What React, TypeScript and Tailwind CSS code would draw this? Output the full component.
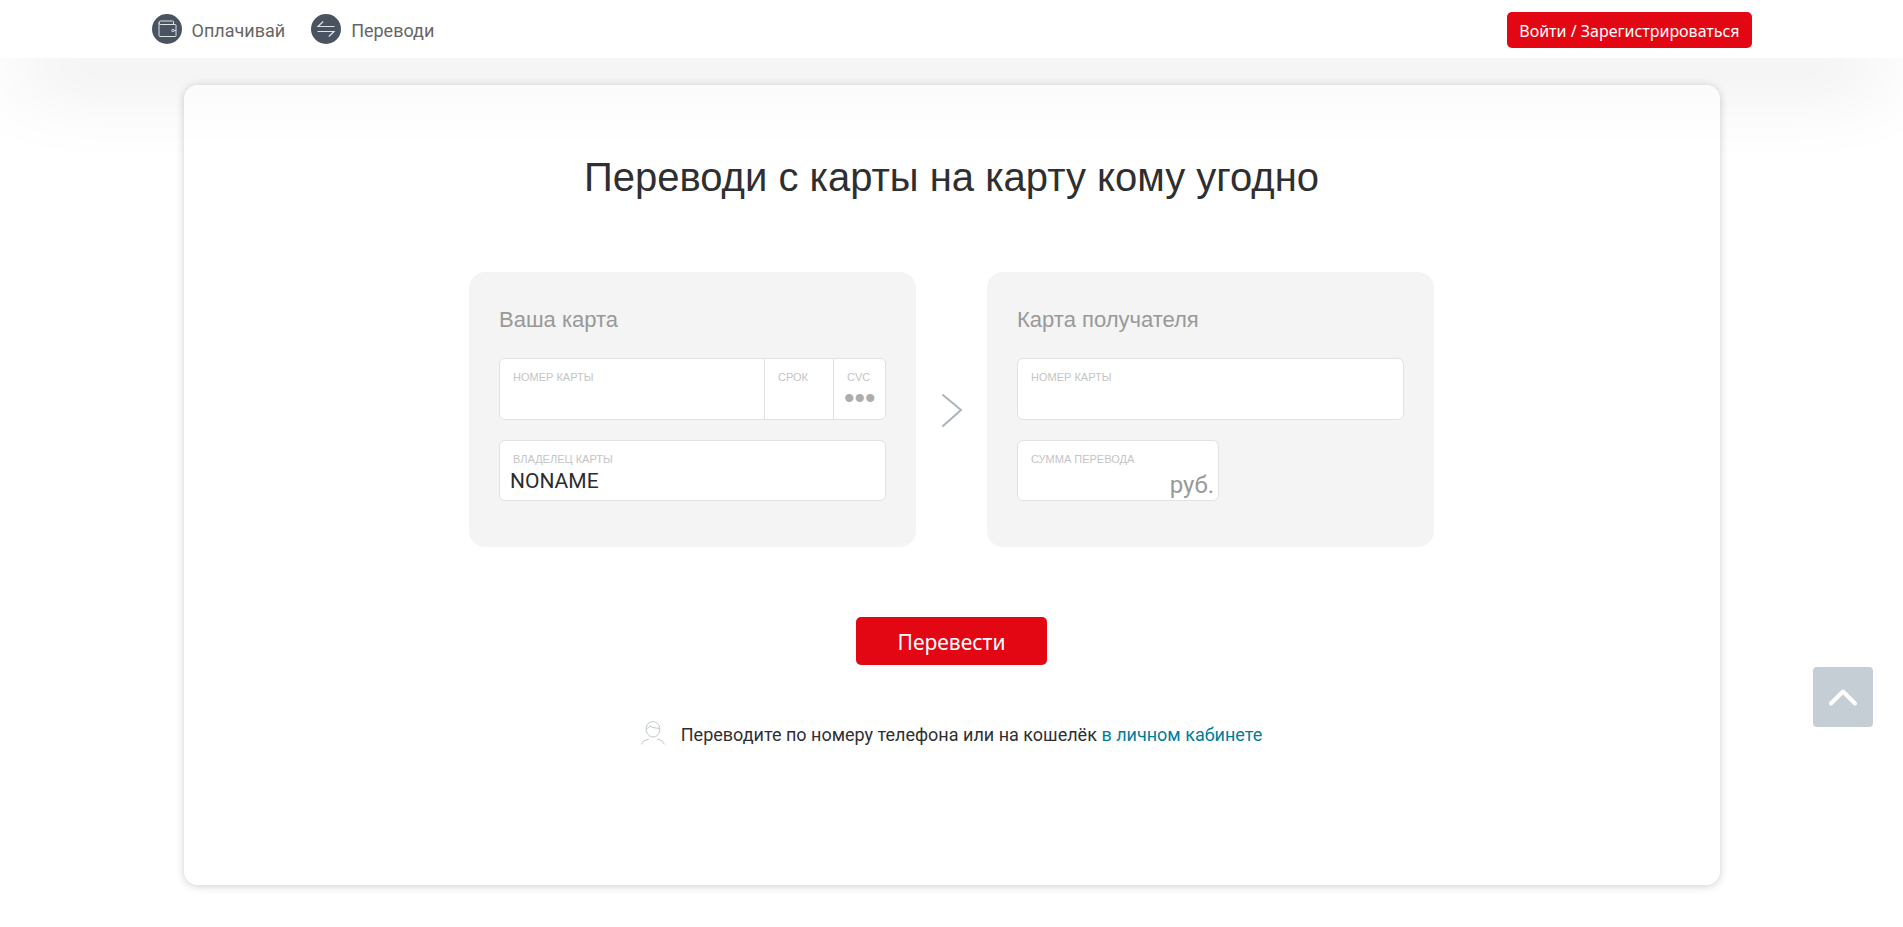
import React, { useId } from "react";

function WalletIcon() {
  return (
    <svg viewBox="0 0 30 30" className="size-[30px]" fill="none" stroke="#dfe3e8" aria-hidden="true">
      <circle cx="15" cy="15" r="15" fill="#4a5461" stroke="none" />
      <path d="M7 8.500v13.100q0 .9.9.9h15.200q.9 0 .9-.9V11.400q0-.9-.9-.9H8.200Q7 10.500 7 9q0-2 1.500-2h12.300q.7 0 .7.700V10.500" strokeWidth="1" />
      <circle cx="20.900" cy="16.500" r="1.200" strokeWidth="1" />
      <path d="M22.100 16.500H24" strokeWidth="1" />
    </svg>
  );
}

function TransferIcon() {
  return (
    <svg viewBox="0 0 30 30" className="size-[30px]" fill="none" stroke="#dfe3e8" strokeWidth="1.200" aria-hidden="true">
      <circle cx="15" cy="15" r="15" fill="#4a5461" stroke="none" />
      <path d="M12.200 7.500 7 12.500h16.500M6.500 17.500H23l-5.200 5" />
    </svg>
  );
}

function PersonIcon() {
  return (
    <svg viewBox="0 0 24 24" className="size-6 shrink-0" fill="none" stroke="#bcc5ca" aria-hidden="true">
      <path d="M12 .7c3.900 0 6.800 2.900 6.800 7.300 0 4.700-3 8-6.800 8s-6.800-3.300-6.800-8C5.200 3.600 8.100.7 12 .7Z" />
      <path d="M5.400 7.500c1.700-.3 2.900-1.400 3.500-3 1.700 2.200 5.200 2.600 9.700 2.800M.8 23.500c.4-2.800 3-4.700 7-5.300M23.200 23.500c-.4-2.800-3-4.700-7-5.300" />
    </svg>
  );
}

type FieldProps = {
  label: string;
  className: string;
  value?: string;
  password?: boolean;
  suffix?: string;
};

function Field({ label, className, value, password, suffix }: FieldProps) {
  const id = useId();
  return (
    <div className={`flex min-w-0 flex-col border-[#e2e2e2] bg-white pt-[10px] ${className}`}>
      <label htmlFor={id} className="pl-[13px] text-[11px] leading-4 whitespace-nowrap text-[#c4c4c4] uppercase">
        {label}
      </label>
      <div className="flex items-center pr-1 pl-[10px]">
        <input
          id={id}
          type={password ? "password" : "text"}
          defaultValue={value}
          placeholder={password ? "•••" : undefined}
          className={
            password
              ? "h-[26px] w-full min-w-0 bg-transparent font-['Liberation_Sans',sans-serif] text-[30px] leading-[26px] outline-none placeholder:text-[#adadad]"
              : "h-7 w-full min-w-0 bg-transparent font-[Roboto,sans-serif] text-[21px] leading-7 text-[#2b2c2d] outline-none"
          }
        />
        {suffix && (
          <span className="pt-1 font-[Roboto,sans-serif] text-2xl leading-7 text-[#999]">{suffix}</span>
        )}
      </div>
    </div>
  );
}

export default function App() {
  return (
    <div className="min-h-screen bg-white font-['Liberation_Sans',Arial,sans-serif] text-[#2f2f31]">
      <header className="bg-white shadow-[0_35px_80px_-20px_rgba(0,0,0,0.23)]">
        <div className="mx-auto flex h-[58px] max-w-[1600px] items-center justify-between">
          <nav className="flex gap-[26px] font-[Roboto,sans-serif] text-lg text-[#666]">
            <a href="#pay" className="flex items-center gap-[10px]">
              <WalletIcon />
              <span className="pt-[3px]">Оплачивай</span>
            </a>
            <a href="#transfer" className="flex items-center gap-[10px]">
              <TransferIcon />
              <span className="pt-[3px]">Переводи</span>
            </a>
          </nav>
          <button
            type="button"
            className="mt-[2px] h-9 rounded-[5px] bg-[#e30613] px-3 pt-[2px] font-['Noto_Sans',sans-serif] text-base text-white"
          >
            Войти / Зарегистрироваться
          </button>
        </div>
      </header>

      <main className="relative mx-auto mt-[27px] mb-[42px] flex max-w-[1536px] flex-col items-center rounded-[14px] bg-white/60 pt-[68px] pb-[136px] shadow-[0_1px_8px_rgba(0,0,0,0.2)]">
        <h1 className="text-[40px] leading-[48px]">Переводи с карты на карту кому угодно</h1>

        <form className="mt-[71px] flex w-full flex-col items-center" onSubmit={(e) => e.preventDefault()}>
          <div className="flex w-full max-w-[965px] items-stretch">
            <section className="flex-1 rounded-2xl bg-[#f4f4f4] px-[30px] pt-8 pb-[46px]">
              <h2 className="text-[22px] leading-8 text-[#999]">Ваша карта</h2>
              <div className="mt-[22px] flex h-[62px] overflow-hidden rounded-md border border-[#e2e2e2]">
                <Field label="Номер карты" className="flex-1" />
                <Field label="Срок" className="w-[69px] border-l" />
                <Field label="CVC" password className="w-[52px] border-l" />
              </div>
              <Field label="Владелец карты" value="NONAME" className="mt-5 h-[61px] rounded-md border" />
            </section>

            <svg viewBox="0 0 71 275" className="w-[71px] shrink-0" fill="none" stroke="#abb4bb" strokeWidth="2" aria-hidden="true">
              <path d="m27 123 18 15-18 16" strokeLinecap="round" />
            </svg>

            <section className="flex-1 rounded-2xl bg-[#f4f4f4] px-[30px] pt-8 pb-[46px]">
              <h2 className="text-[22px] leading-8 text-[#999]">Карта получателя</h2>
              <Field label="Номер карты" className="mt-[22px] h-[62px] rounded-md border" />
              <Field label="Сумма перевода" suffix="руб." className="mt-5 h-[61px] w-[202px] rounded-md border" />
            </section>
          </div>

          <button
            type="submit"
            className="mt-[70px] h-12 w-[191px] rounded-[5px] bg-[#e30613] pt-1 font-['Noto_Sans',sans-serif] text-[21px] text-white"
          >
            Перевести
          </button>
        </form>

        <div className="mt-[56px] flex gap-4 font-[Roboto,sans-serif] text-lg leading-7">
          <PersonIcon />
          <p>
            Переводите по номеру телефона или на кошелёк{" "}
            <a href="#cabinet" className="text-[#007c9b]">в личном кабинете</a>
          </p>
        </div>
      </main>

      <button
        type="button"
        aria-label="Наверх"
        className="fixed right-[30px] bottom-[200px] flex size-[60px] items-center justify-center rounded-[4px] bg-[#c6ced5]"
      >
        <svg viewBox="0 0 60 60" className="size-[60px]" fill="none" stroke="#fff" strokeWidth="4" strokeLinecap="round" strokeLinejoin="round" aria-hidden="true">
          <path d="m18 36.500 12-12 12 12" />
        </svg>
      </button>
    </div>
  );
}
